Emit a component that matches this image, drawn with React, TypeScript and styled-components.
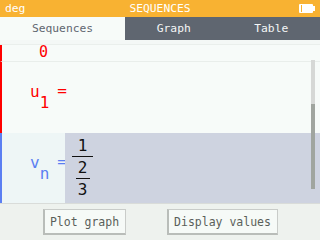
import React from "react";
import styled, { createGlobalStyle } from "styled-components";

const Global = createGlobalStyle`
  html, body {
    margin: 0;
    padding: 0;
    width: 320px;
    height: 240px;
    overflow: hidden;
    background: #f7fbf9;
  }
  * { box-sizing: border-box; }
`;

const mono = `"DejaVu Sans Mono", "Liberation Mono", monospace`;

const Screen = styled.div`
  width: 320px;
  height: 240px;
  display: flex;
  flex-direction: column;
  font-family: ${mono};
  background: #f7fbf9;
`;

const Header = styled.div`
  height: 17px;
  background: #f8b232;
  color: #ffffff;
  display: grid;
  grid-template-columns: 1fr auto 1fr;
  align-items: center;
  padding: 0 5px 0 5px;
  font-size: 11.3px;
  line-height: 17px;
`;

const Title = styled.div`
  text-align: center;
`;

const Battery = styled.div`
  justify-self: end;
  display: flex;
  align-items: center;
`;

const Tabs = styled.div`
  height: 23px;
  display: grid;
  grid-template-columns: 125px 1fr 1fr;
  background: #5f6670;
`;

const Tab = styled.div<{ $active?: boolean }>`
  display: flex;
  align-items: center;
  justify-content: center;
  font-size: 11.3px;
  color: ${(p) => (p.$active ? "#5f6670" : "#f4f6f6")};
  background: ${(p) => (p.$active ? "#f7fbf9" : "transparent")};
`;

const List = styled.div`
  position: relative;
  height: 163px;
  overflow: hidden;
  display: flex;
  flex-direction: column;
`;

const Peek = styled.div`
  height: 5px;
  background: #f4f8f6;
  border-bottom: 1px solid #eaefec;
`;

const Row = styled.div<{ $h: number; $bar: string; $bottom?: boolean }>`
  height: ${(p) => p.$h}px;
  display: grid;
  grid-template-columns: 63px 1fr;
  border-left: 2px solid ${(p) => p.$bar};
  border-bottom: ${(p) => (p.$bottom ? "1px solid #e9eeeb" : "none")};
`;

const NameCell = styled.div<{ $bg?: string }>`
  display: flex;
  align-items: center;
  padding-left: 28px;
  background: ${(p) => p.$bg || "transparent"};
`;

const ValueCell = styled.div<{ $bg?: string }>`
  display: flex;
  align-items: center;
  background: ${(p) => p.$bg || "transparent"};
`;

const Name = styled.div<{ $color: string }>`
  display: flex;
  align-items: flex-start;
  color: ${(p) => p.$color};
  font-size: 16px;
  line-height: 16px;
`;

const Sub = styled.span`
  margin-top: 11px;
`;

const Eq = styled.span`
  margin-left: 8px;
  margin-top: -1px;
`;

const Zero = styled.div`
  color: #ff0000;
  font-size: 15px;
  line-height: 15px;
  padding-left: 9px;
  margin-top: -1px;
`;

const Frac = styled.div<{ $inset?: number }>`
  display: flex;
  flex-direction: column;
  align-items: center;
  margin-left: ${(p) => p.$inset ?? 0}px;
  font-size: 16px;
  line-height: 14px;
  color: #111;
`;

const FracBar = styled.div<{ $w: number }>`
  width: ${(p) => p.$w}px;
  height: 1px;
  background: #111;
  margin: 3px 0 4px;
`;

const Track = styled.div`
  position: absolute;
  left: 311px;
  top: 20px;
  width: 4px;
  height: 44px;
  background: #d6d8d6;
`;

const Thumb = styled.div`
  position: absolute;
  left: 311px;
  top: 64px;
  width: 4px;
  height: 85px;
  background: #a0a59f;
`;

const Footer = styled.div`
  flex: 1;
  background: #eef2ee;
  border-top: 1px solid #d9dcd9;
  display: flex;
  justify-content: center;
  align-items: flex-start;
  gap: 41px;
  padding-top: 5px;
`;

const Button = styled.div<{ $w: number }>`
  width: ${(p) => p.$w}px;
  height: 26px;
  background: #f6faf7;
  border: 1px solid #c9ccc9;
  border-left: 2px solid #b9bdb9;
  border-bottom: 2px solid #b9bdb9;
  display: flex;
  align-items: center;
  justify-content: center;
  font-size: 11.5px;
  color: #5a5f5a;
`;

export default function App() {
  return (
    <>
      <Global />
      <Screen>
        <Header>
          <div>deg</div>
          <Title>SEQUENCES</Title>
          <Battery>
            <svg width="16" height="9" viewBox="0 0 16 9">
              <rect x="0" y="0" width="14" height="9" rx="1" fill="#fff" />
              <rect x="2" y="1" width="1" height="7" fill="#f8b232" />
              <rect x="14" y="2" width="2" height="5" fill="#fff" />
            </svg>
          </Battery>
        </Header>
        <Tabs>
          <Tab $active>Sequences</Tab>
          <Tab>Graph</Tab>
          <Tab>Table</Tab>
        </Tabs>
        <List>
          <Peek />
          <Row $h={17} $bar="#ff0000" $bottom>
            <NameCell>
              <Zero>0</Zero>
            </NameCell>
            <ValueCell />
          </Row>
          <Row $h={71} $bar="#ff0000">
            <NameCell>
              <Name $color="#ff0000">
                <span>u</span>
                <Sub>1</Sub>
                <Eq>=</Eq>
              </Name>
            </NameCell>
            <ValueCell />
          </Row>
          <Row $h={70} $bar="#5b7ff2">
            <NameCell $bg="#eef6f6">
              <Name $color="#5b7ff2">
                <span>v</span>
                <Sub>n</Sub>
                <Eq>=</Eq>
              </Name>
            </NameCell>
            <ValueCell $bg="#ced3e0">
              <Frac $inset={7}>
                <span>1</span>
                <FracBar $w={21} />
                <Frac>
                  <span>2</span>
                  <FracBar $w={14} />
                  <span>3</span>
                </Frac>
              </Frac>
            </ValueCell>
          </Row>
          <Track />
          <Thumb />
        </List>
        <Footer>
          <Button $w={83}>Plot graph</Button>
          <Button $w={111}>Display values</Button>
        </Footer>
      </Screen>
    </>
  );
}
